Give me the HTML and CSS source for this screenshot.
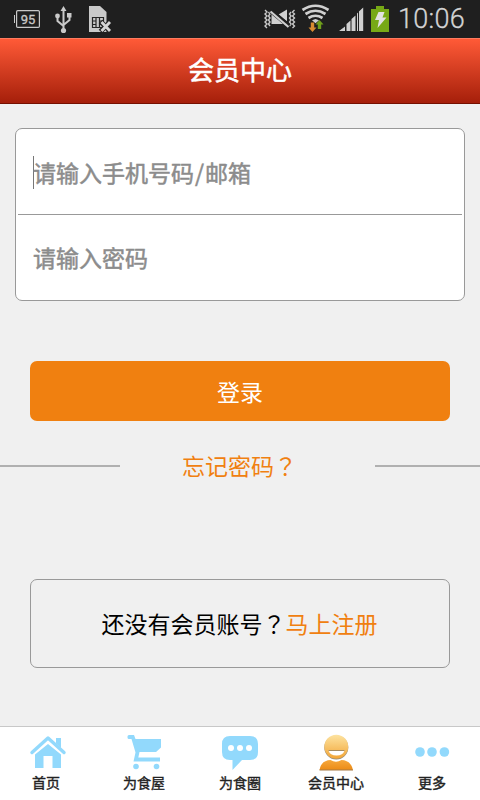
FILE: index.html
```html
<!DOCTYPE html>
<html lang="zh-CN">
<head>
<meta charset="utf-8">
<title>会员中心</title>
<link rel="stylesheet" href="styles.css">
</head>
<body>
<div class="screen">
  <div class="status">
    <svg class="status-icons" width="120" height="38" viewBox="0 0 120 38" fill="none" stroke="#c9c9c9">
      <rect x="16.600" y="10.600" width="22.800" height="16.800" rx="1.200" stroke-width="1.200"/>
      <path d="M14.500 15v8" stroke-width="1"/>
      <text x="28" y="24.200" text-anchor="middle" class="battery-level">95</text>
      <g stroke-width="2"><path d="M63.500 9v22M57.500 17v4l6 5M69.500 16v4l-6 5"/></g>
      <g fill="#c9c9c9" stroke="none"><path d="M63.500 6l3 5h-6zM67 13h4.500v4.500H67z"/><circle cx="57.500" cy="16" r="2.400"/><circle cx="63.500" cy="30.500" r="2.600"/>
      <path d="M89 6h11l6.500 6v20H89z"/></g>
      <g stroke="#252525" stroke-width="1.200"><path d="M92.500 17.500h11v10h-11zM96 17.500v10M99.500 17.500v10M92.500 21h3.500M92.500 24.500h3.500M99.500 21h4M99.500 24.500h4"/></g>
      <path d="M100.500 21.500l10 10M110.500 21.500l-10 10" stroke="#222" stroke-width="5"/>
      <path d="M101.500 22l8.500 9M110 22l-8.500 9" stroke="#d5d5d5" stroke-width="2.800"/>
    </svg>
    <div class="status-right">
      <svg width="135" height="38" viewBox="260 0 135 38" fill="none">
        <g stroke="#c9c9c9" stroke-width="1.400"><path d="M265 10l2 2-2 2 2 2-2 2 2 2-2 2 2 2-2 2 2 2M268.500 12l1.500 2-1.500 2 1.500 2-1.500 2 1.500 2-1.500 2 1.500 2M294.500 10l-2 2 2 2-2 2 2 2-2 2 2 2-2 2 2 2-2 2M291 12l-1.500 2 1.500 2-1.500 2 1.500 2-1.500 2 1.500 2-1.500 2"/></g>
        <path d="M271.500 13.500l13 10.500h-13z" fill="#d0d0d0"/><path d="M278.500 14.500L287 9.500v12z" fill="#d0d0d0"/>
        <path d="M271 11l18 15" stroke="#202020" stroke-width="4.600"/><path d="M270.500 11.500l18 15.500" stroke="#d0d0d0" stroke-width="2.200"/>
        <path d="M302.500 10q13-8.500 26 0M305.500 14q10-6.500 20 0M308.500 18q7-4.500 14 0" stroke="#d0d0d0" stroke-width="2.700"/>
        <path d="M315.500 19l-3.500 1.200 3.500 3 3.500-3z" fill="#d0d0d0"/>
        <path d="M310.800 22.500h3.400v5h2.300l-4 4.500-4-4.500h2.300z" fill="#d98b31"/><path d="M317.800 29h3.400v-4.500h2.300l-4-4.500-4 4.500h2.300z" fill="#6f9f1b"/>
        <path d="M339 31l6-4.500V31zM346.500 24l4-3.500V31h-4zM351.500 19l4-3.500V31h-4zM357 13.500l1.500-1.500V31H357zM358.900 11.500l4.300-4V31h-4.300z" fill="#d0d0d0"/>
        <path d="M358.500 7v25" stroke="#202020"/>
        <path d="M371 9h5V6h8v3h5v23h-18z" fill="#77a916"/><path d="M378.500 12h6l-2 5.500h4L377.500 28l1.500-8h-4z" fill="#e2e2e2"/>
      </svg>
      <span class="clock">10:06</span>
    </div>
  </div>
  <header class="header"><h1 class="title">会员中心</h1></header>
  <main class="main">
    <form class="fields">
      <div class="field field-first"><span class="caret"></span><span class="hint">请输入手机号码<span class="slash">/</span>邮箱</span></div>
      <div class="field"><span class="hint">请输入密码</span></div>
    </form>
    <div class="login">登录</div>
    <div class="forgot"><span class="rule"></span><span class="forgot-text">忘记密码<span class="mark" lang="zh-TW">？</span></span><span class="rule rule-end"></span></div>
    <div class="register"><span>还没有会员账号<span class="mark" lang="zh-TW">？</span></span><span class="link">马上注册</span></div>
  </main>
  <nav class="tabs">
    <div class="tab tab-home">
      <svg class="icon" width="40" height="38" viewBox="28 733 40 38" fill="#92d9fc"><path d="M35 754.500l13-10.500 13 10.500V768h-8.500v-12h-9v12H35z"/><path d="M32 752.500L48 738l16 14.500" fill="none" stroke="#92d9fc" stroke-width="3.400" stroke-linecap="round" stroke-linejoin="round"/><path d="M56 738h5v10l-5-4.500z"/></svg>
      <span class="label">首页</span>
    </div>
    <div class="tab">
      <svg class="icon" width="40" height="38" viewBox="124 733 40 38" fill="#92d9fc"><path d="M127.500 736.500q0-1.500 1.500-1.500h5l1.500 4H161v8.500l-5 4.500h-16.500l-1.200 5.500H160v4h-26.500l2-9-4-13.500h-2.500q-1.500 0-1.500-1.500z"/><circle cx="136" cy="766.500" r="2.800"/><circle cx="156.500" cy="766.500" r="2.800"/></svg>
      <span class="label">为食屋</span>
    </div>
    <div class="tab">
      <svg class="icon" width="40" height="38" viewBox="220 733 40 38" fill="#92d9fc"><path d="M230 736h20q8 0 8 8v8q0 8-8 8h-8l-9.500 10v-10H230q-8 0-8-8v-8q0-8 8-8z"/><g fill="#fff"><circle cx="231" cy="748" r="3"/><circle cx="240" cy="748" r="3"/><circle cx="249" cy="748" r="3"/></g></svg>
      <span class="label">为食圈</span>
    </div>
    <div class="tab">
      <svg class="icon" width="40" height="38" viewBox="316 733 40 38">
        <defs><linearGradient id="face" x2="0" y2="1"><stop stop-color="#fde3a0"/><stop offset="1" stop-color="#f2a638"/></linearGradient><linearGradient id="body" x2="0" y2="1"><stop stop-color="#f6a83c"/><stop offset="1" stop-color="#ec8b16"/></linearGradient></defs>
        <path d="M319.500 770q1.500-9.500 11-10 5.500 3.500 11 0 9.500.5 11.500 10z" fill="url(#body)"/><path d="M319.500 770h33.500" stroke="#a77b44"/>
        <circle cx="336.300" cy="747.500" r="12" fill="#8e8a80"/><circle cx="336.300" cy="746.700" r="12" fill="url(#face)"/>
        <path d="M328.500 750.500h16q-1.500 5-8 5t-8-5z" fill="#fff"/><path d="M328.500 750.500h16" stroke="#a58c63"/>
      </svg>
      <span class="label">会员中心</span>
    </div>
    <div class="tab">
      <svg class="icon" width="40" height="38" viewBox="412 733 40 38" fill="#92d9fc"><circle cx="420" cy="752" r="4.800"/><circle cx="432" cy="752" r="4.800"/><circle cx="444.400" cy="752" r="4.800"/></svg>
      <span class="label">更多</span>
    </div>
  </nav>
</div>
</body>
</html>
```
FILE: styles.css
```css
* { box-sizing: border-box; }
body { margin: 0; font-family: "Noto Sans CJK SC", sans-serif; text-spacing-trim: space-all; }
.screen { width: 480px; height: 800px; display: flex; flex-direction: column; background: #f0f0f0; overflow: hidden; }
.status { height: 38px; flex: none; display: flex; justify-content: space-between; background: #1f1f1f; }
.battery-level { font: 13px Roboto, sans-serif; fill: #c9c9c9; stroke: #c9c9c9; stroke-width: 0.3px; }
.status-right { display: flex; width: 220px; }
.clock { font: 27px/39px Roboto, sans-serif; font-weight: 300; color: #d4d4d4; margin-left: 3px; letter-spacing: 0.3px; white-space: nowrap; -webkit-text-stroke: 0.3px #d4d4d4; }
.header { height: 66px; flex: none; display: flex; align-items: center; justify-content: center; padding-bottom: 4px; background: linear-gradient(#ff5a37, #a51f0a); border-top: 1px solid #ff7b5f; border-bottom: 1px solid #751000; }
.title { margin: 0; color: #fff; font-size: 26px; line-height: 38px; font-weight: 400; -webkit-text-stroke: 0.5px #fff; }
.main { flex: 1; display: flex; flex-direction: column; padding-top: 24px; font-size: 23px; line-height: 34px; }
.fields { height: 173px; margin: 0 15px; padding: 0 2px; border: 1px solid #999; border-radius: 7px; background: #fff; }
.field { height: 85px; display: flex; align-items: center; padding: 0 0 2px 15px; color: #8c8c8c; }
.field-first { height: 86px; border-bottom: 1px solid #999; padding-top: 2px; }
.caret { width: 1px; height: 33px; margin: 2px -1px 0 0; background: #777; }
.hint { -webkit-text-stroke: 0.5px #8c8c8c; }
.slash { padding: 0 1px; }
.login { height: 60px; margin: 60px 30px 0; display: flex; align-items: center; justify-content: center; padding-bottom: 1px; border-radius: 7px; background: #f08010; color: #fff; }
.forgot { height: 34px; margin-top: 28px; display: flex; align-items: center; color: #f08010; }
.rule { width: 120px; height: 2px; background: #b0b0b0; }
.rule-end { width: 105px; }
.forgot-text { flex: 1; padding: 0 0 2px 62px; }
.mark { font-family: "Noto Sans CJK TC", sans-serif; }
.register { height: 89px; margin: 96px 30px 0; display: flex; align-items: center; justify-content: center; padding: 0 1px 2px 0; border: 1px solid #999; border-radius: 7px; color: #000; }
.link { color: #f08010; }
.tabs { height: 74px; flex: none; display: flex; background: #fff; border-top: 1px solid #c8c8c8; }
.tab { flex: 1; display: flex; flex-direction: column; align-items: center; padding-top: 6px; }
.icon { flex: none; }
.label { font-size: 14px; line-height: 20px; margin-top: 1px; color: #222; -webkit-text-stroke: 0.4px #222; }
.tab-home .label { margin-right: 4px; }
```
